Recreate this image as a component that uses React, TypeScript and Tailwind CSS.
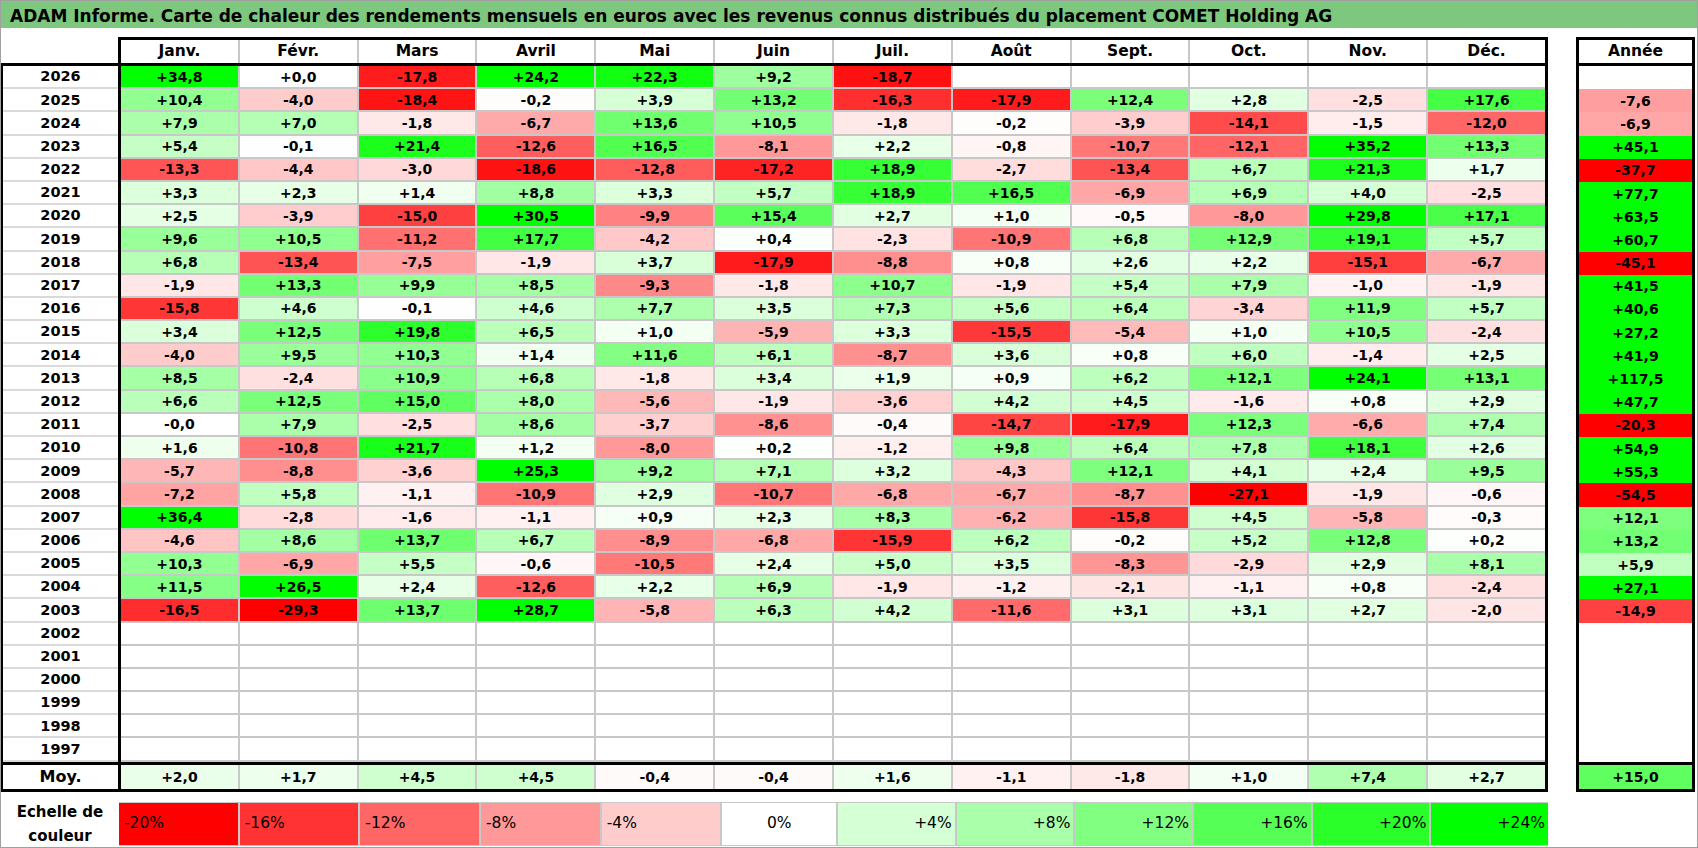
import React from 'react';

const months = ['Janv.', 'Févr.', 'Mars', 'Avril', 'Mai', 'Juin', 'Juil.', 'Août', 'Sept.', 'Oct.', 'Nov.', 'Déc.'];

type Row = [string, (string | null)[], string | null];

const E = null;

const rows: Row[] = [
  ['2026', ['+34,8', '+0,0', '-17,8', '+24,2', '+22,3', '+9,2', '-18,7', E, E, E, E, E], null],
  ['2025', ['+10,4', '-4,0', '-18,4', '-0,2', '+3,9', '+13,2', '-16,3', '-17,9', '+12,4', '+2,8', '-2,5', '+17,6'], '-7,6'],
  ['2024', ['+7,9', '+7,0', '-1,8', '-6,7', '+13,6', '+10,5', '-1,8', '-0,2', '-3,9', '-14,1', '-1,5', '-12,0'], '-6,9'],
  ['2023', ['+5,4', '-0,1', '+21,4', '-12,6', '+16,5', '-8,1', '+2,2', '-0,8', '-10,7', '-12,1', '+35,2', '+13,3'], '+45,1'],
  ['2022', ['-13,3', '-4,4', '-3,0', '-18,6', '-12,8', '-17,2', '+18,9', '-2,7', '-13,4', '+6,7', '+21,3', '+1,7'], '-37,7'],
  ['2021', ['+3,3', '+2,3', '+1,4', '+8,8', '+3,3', '+5,7', '+18,9', '+16,5', '-6,9', '+6,9', '+4,0', '-2,5'], '+77,7'],
  ['2020', ['+2,5', '-3,9', '-15,0', '+30,5', '-9,9', '+15,4', '+2,7', '+1,0', '-0,5', '-8,0', '+29,8', '+17,1'], '+63,5'],
  ['2019', ['+9,6', '+10,5', '-11,2', '+17,7', '-4,2', '+0,4', '-2,3', '-10,9', '+6,8', '+12,9', '+19,1', '+5,7'], '+60,7'],
  ['2018', ['+6,8', '-13,4', '-7,5', '-1,9', '+3,7', '-17,9', '-8,8', '+0,8', '+2,6', '+2,2', '-15,1', '-6,7'], '-45,1'],
  ['2017', ['-1,9', '+13,3', '+9,9', '+8,5', '-9,3', '-1,8', '+10,7', '-1,9', '+5,4', '+7,9', '-1,0', '-1,9'], '+41,5'],
  ['2016', ['-15,8', '+4,6', '-0,1', '+4,6', '+7,7', '+3,5', '+7,3', '+5,6', '+6,4', '-3,4', '+11,9', '+5,7'], '+40,6'],
  ['2015', ['+3,4', '+12,5', '+19,8', '+6,5', '+1,0', '-5,9', '+3,3', '-15,5', '-5,4', '+1,0', '+10,5', '-2,4'], '+27,2'],
  ['2014', ['-4,0', '+9,5', '+10,3', '+1,4', '+11,6', '+6,1', '-8,7', '+3,6', '+0,8', '+6,0', '-1,4', '+2,5'], '+41,9'],
  ['2013', ['+8,5', '-2,4', '+10,9', '+6,8', '-1,8', '+3,4', '+1,9', '+0,9', '+6,2', '+12,1', '+24,1', '+13,1'], '+117,5'],
  ['2012', ['+6,6', '+12,5', '+15,0', '+8,0', '-5,6', '-1,9', '-3,6', '+4,2', '+4,5', '-1,6', '+0,8', '+2,9'], '+47,7'],
  ['2011', ['-0,0', '+7,9', '-2,5', '+8,6', '-3,7', '-8,6', '-0,4', '-14,7', '-17,9', '+12,3', '-6,6', '+7,4'], '-20,3'],
  ['2010', ['+1,6', '-10,8', '+21,7', '+1,2', '-8,0', '+0,2', '-1,2', '+9,8', '+6,4', '+7,8', '+18,1', '+2,6'], '+54,9'],
  ['2009', ['-5,7', '-8,8', '-3,6', '+25,3', '+9,2', '+7,1', '+3,2', '-4,3', '+12,1', '+4,1', '+2,4', '+9,5'], '+55,3'],
  ['2008', ['-7,2', '+5,8', '-1,1', '-10,9', '+2,9', '-10,7', '-6,8', '-6,7', '-8,7', '-27,1', '-1,9', '-0,6'], '-54,5'],
  ['2007', ['+36,4', '-2,8', '-1,6', '-1,1', '+0,9', '+2,3', '+8,3', '-6,2', '-15,8', '+4,5', '-5,8', '-0,3'], '+12,1'],
  ['2006', ['-4,6', '+8,6', '+13,7', '+6,7', '-8,9', '-6,8', '-15,9', '+6,2', '-0,2', '+5,2', '+12,8', '+0,2'], '+13,2'],
  ['2005', ['+10,3', '-6,9', '+5,5', '-0,6', '-10,5', '+2,4', '+5,0', '+3,5', '-8,3', '-2,9', '+2,9', '+8,1'], '+5,9'],
  ['2004', ['+11,5', '+26,5', '+2,4', '-12,6', '+2,2', '+6,9', '-1,9', '-1,2', '-2,1', '-1,1', '+0,8', '-2,4'], '+27,1'],
  ['2003', ['-16,5', '-29,3', '+13,7', '+28,7', '-5,8', '+6,3', '+4,2', '-11,6', '+3,1', '+3,1', '+2,7', '-2,0'], '-14,9'],
  ['2002', [E, E, E, E, E, E, E, E, E, E, E, E], null],
  ['2001', [E, E, E, E, E, E, E, E, E, E, E, E], null],
  ['2000', [E, E, E, E, E, E, E, E, E, E, E, E], null],
  ['1999', [E, E, E, E, E, E, E, E, E, E, E, E], null],
  ['1998', [E, E, E, E, E, E, E, E, E, E, E, E], null],
  ['1997', [E, E, E, E, E, E, E, E, E, E, E, E], null],
];

const moy = ['+2,0', '+1,7', '+4,5', '+4,5', '-0,4', '-0,4', '+1,6', '-1,1', '-1,8', '+1,0', '+7,4', '+2,7'];
const moyYear = '+15,0';

const legend: [string, number, 'l' | 'c' | 'r'][] = [
  ['-20%', -20, 'l'],
  ['-16%', -16, 'l'],
  ['-12%', -12, 'l'],
  ['-8%', -8, 'l'],
  ['-4%', -4, 'l'],
  ['0%', 0, 'c'],
  ['+4%', 4, 'r'],
  ['+8%', 8, 'r'],
  ['+12%', 12, 'r'],
  ['+16%', 16, 'r'],
  ['+20%', 20, 'r'],
  ['+24%', 24, 'r'],
];

function colorOf(v: number): string {
  if (v < 0) {
    const t = Math.min(-v / 20, 1);
    const c = Math.round(255 * (1 - t));
    return `rgb(255,${c},${c})`;
  }
  const t = Math.min(v / 24, 1);
  const c = Math.round(255 * (1 - t));
  return `rgb(${c},255,${c})`;
}

function parse(s: string): number {
  return parseFloat(s.replace(',', '.'));
}

function bg(s: string | null): string {
  if (s === null) return '#ffffff';
  return colorOf(parse(s));
}

const ROW_H = 'h-[23.2px]';

export default function App() {
  return (
    <div className="w-[1698px] h-[848px] border border-[#a0a0a0] bg-white flex flex-col overflow-hidden font-['DejaVu_Sans',sans-serif] text-black">
      {/* Title */}
      <div className="h-[27px] shrink-0 bg-[#7ec77f] flex items-center pl-[9px] pt-[3px]">
        <span className="text-[17px] font-bold leading-none whitespace-nowrap">
          ADAM Informe. Carte de chaleur des rendements mensuels en euros avec les revenus connus distribués du placement COMET Holding AG
        </span>
      </div>

      <div className="mt-[9px] flex">
        {/* Main table */}
        <div className="w-[1547px] flex flex-col">
          {/* Header */}
          <div className="h-[29px] flex border-b-[3px] border-black">
            <div className="w-[117px]" />
            <div className="flex-1 flex border-t-[3px] border-x-[3px] border-black">
              {months.map((m, i) => (
                <div
                  key={m}
                  className={`flex-1 basis-0 flex items-center justify-center text-[15.5px] font-bold leading-none ${i < 11 ? 'border-r-2 border-[#c8c8c8]' : ''}`}
                >
                  {m}
                </div>
              ))}
            </div>
          </div>

          {/* Body */}
          <div className="flex">
            <div className="w-[117px] flex flex-col border-l-2 border-black">
              {rows.map((r) => (
                <div
                  key={r[0]}
                  className={`${ROW_H} flex items-center justify-center text-[14.5px] font-bold leading-none border-b-2 border-[#dadada]`}
                >
                  {r[0]}
                </div>
              ))}
            </div>
            <div className="flex-1 flex flex-col border-x-[3px] border-black">
              {rows.map((r) => (
                <div key={r[0]} className={`${ROW_H} flex`}>
                  {r[1].map((v, i) => (
                    <div
                      key={i}
                      className={`flex-1 basis-0 flex items-center justify-center text-[14px] font-bold leading-none border-b-2 border-[#c8c8c8] ${i < 11 ? 'border-r-2' : ''}`}
                      style={{ backgroundColor: bg(v) }}
                    >
                      {v ?? ''}
                    </div>
                  ))}
                </div>
              ))}
            </div>
          </div>

          {/* Moy row */}
          <div className="h-[30px] flex border-y-[3px] border-l-2 border-black">
            <div className="w-[115px] flex items-center justify-center text-[16px] font-bold leading-none">Moy.</div>
            <div className="flex-1 flex border-x-[3px] border-black">
              {moy.map((v, i) => (
                <div
                  key={i}
                  className={`flex-1 basis-0 flex items-center justify-center text-[14px] font-bold leading-none ${i < 11 ? 'border-r-2 border-[#c8c8c8]' : ''}`}
                  style={{ backgroundColor: bg(v) }}
                >
                  {v}
                </div>
              ))}
            </div>
          </div>

          {/* Legend */}
          <div className="mt-[10px] h-[44px] flex">
            <div className="w-[118px] flex flex-col items-center justify-center text-[15px] font-bold leading-[24px]">
              <span>Echelle de</span>
              <span>couleur</span>
            </div>
            <div className="flex-1 flex border-y border-[#c8c8c8]">
              {legend.map(([label, v, a], i) => (
                <div
                  key={label}
                  className={`flex-1 basis-0 flex items-center text-[15.5px] leading-none border-[#c8c8c8] ${i < 11 ? 'border-r-2' : ''} ${
                    a === 'l' ? 'justify-start pl-[5px]' : a === 'c' ? 'justify-center' : 'justify-end pr-[3px]'
                  }`}
                  style={{ backgroundColor: colorOf(v) }}
                >
                  {label}
                </div>
              ))}
            </div>
          </div>
        </div>

        {/* Année column */}
        <div className="ml-[28px] w-[119px] flex flex-col">
          <div className="h-[29px] flex items-center justify-center border-[3px] border-black text-[15.5px] font-bold leading-none">
            Année
          </div>
          <div className="flex flex-col border-x-[3px] border-black">
            {rows.map((r) => (
              <div
                key={r[0]}
                className={`${ROW_H} flex items-center justify-center text-[14px] font-bold leading-none`}
                style={{ backgroundColor: bg(r[2]) }}
              >
                {r[2] ?? ''}
              </div>
            ))}
          </div>
          <div
            className="h-[30px] flex items-center justify-center border-[3px] border-black text-[14px] font-bold leading-none"
            style={{ backgroundColor: bg(moyYear) }}
          >
            {moyYear}
          </div>
        </div>
      </div>
    </div>
  );
}
